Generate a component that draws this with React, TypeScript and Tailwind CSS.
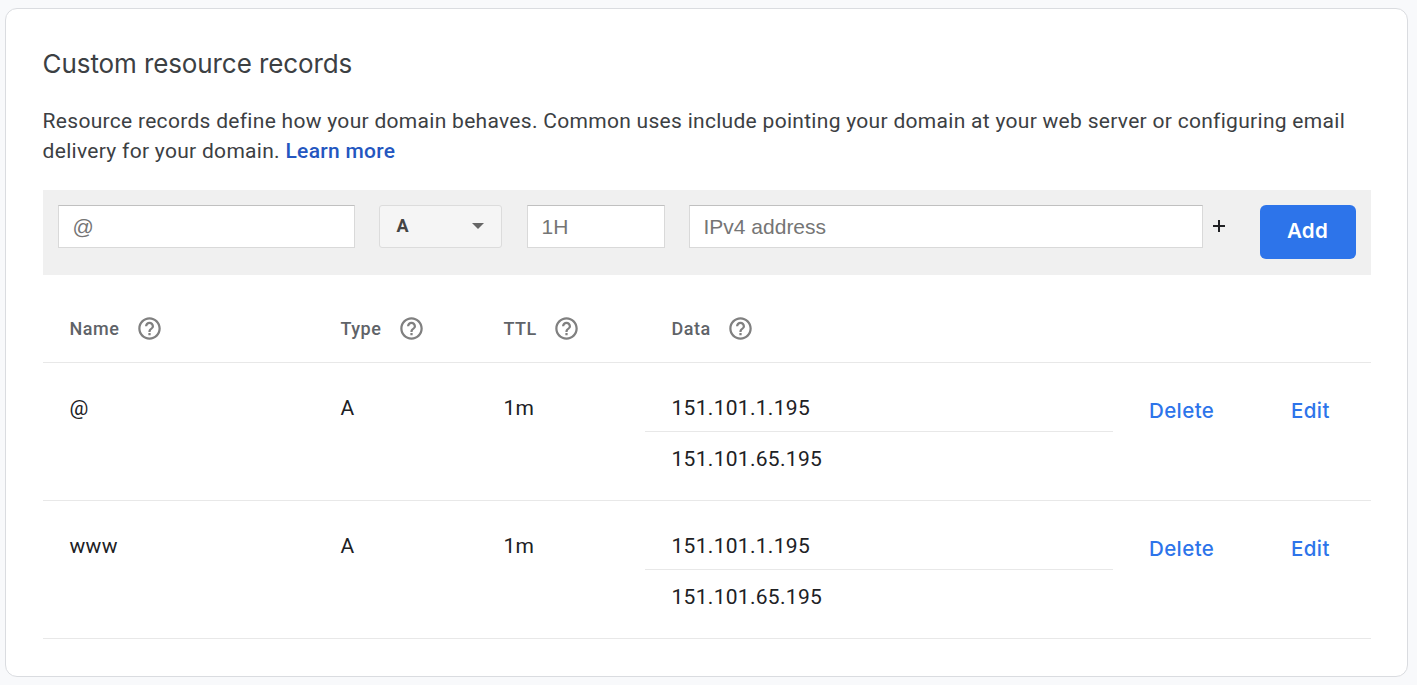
type DnsRecord = { name: string; type: string; ttl: string; data: string[] };

const records: DnsRecord[] = [
  { name: "@", type: "A", ttl: "1m", data: ["151.101.1.195", "151.101.65.195"] },
  { name: "www", type: "A", ttl: "1m", data: ["151.101.1.195", "151.101.65.195"] },
];

const inputClass =
  "h-[43px] shrink-0 border border-[#d9d9d9] border-t-[#c0c0c0] bg-white pl-[13.5px] font-['Liberation_Sans',sans-serif] text-[21px] text-[#757575] placeholder:text-[#757575] placeholder:opacity-100 outline-none";

const actionClass =
  "cursor-pointer pt-[33px] pl-[9px] font-['Inter',sans-serif] text-[20.5px] font-medium tracking-[0.4px] text-[#2d74ea]";

function HelpIcon() {
  return (
    <svg viewBox="0 0 24 24" className="size-[27px] shrink-0 fill-[#808080]" aria-hidden="true">
      <path d="M11 18h2v-2h-2v2zm1-16C6.48 2 2 6.480 2 12s4.480 10 10 10 10-4.480 10-10S17.520 2 12 2zm0 18c-4.410 0-8-3.590-8-8s3.590-8 8-8 8 3.590 8 8-3.590 8-8 8zm0-14c-2.210 0-4 1.790-4 4h2c0-1.100.9-2 2-2s2 .9 2 2c0 2-3 1.750-3 5h2c0-2.250 3-2.500 3-5 0-2.210-1.790-4-4-4z" />
    </svg>
  );
}

function ColumnHeading({ label }: { label: string }) {
  return (
    <div className="flex h-[27px] items-center gap-[16.6px] text-[18px] font-medium tracking-[0.5px] text-[#5f6368]">
      <span>{label}</span>
      <HelpIcon />
    </div>
  );
}

function RecordRow({ record }: { record: DnsRecord }) {
  return (
    <div className="grid h-[138px] grid-cols-[271px_163px_141.5px_495px_142px_1fr] border-b border-[#e8e8e8] pl-[26.5px] text-[21px] leading-[30px] tracking-[0.3px] text-[#202124]">
      <div className="pt-[30px]">{record.name}</div>
      <div className="pt-[30px]">{record.type}</div>
      <div className="pt-[30px]">{record.ttl}</div>
      <div className="w-[468px] pt-[18px]">
        {record.data.map((value, index) => (
          <div key={value} className={index === 0 ? "h-[51px] border-b border-[#e8e8e8] pt-[12px] pl-[26.5px]" : "pt-[12px] pl-[26.5px]"}>
            {value}
          </div>
        ))}
      </div>
      <a className={actionClass}>Delete</a>
      <a className={actionClass}>Edit</a>
    </div>
  );
}

export default function App() {
  return (
    <div className="flex h-[685px] w-[1417px] bg-[#f8f9fb] pt-[8px] pl-[5px] font-['Roboto',sans-serif]">
      <main className="h-[669px] w-[1403px] rounded-[12px] border border-[#dadce0] bg-white pr-[37px] pl-[36.6px] pt-[37px]">
        <h1 className="h-[36px] whitespace-nowrap font-['Inter',sans-serif] text-[26px] leading-[36px] tracking-[-0.1px] text-[#3c4043]">
          Custom resource records
        </h1>
        <p className="mt-[24px] w-[1327px] text-[21px] leading-[30px] tracking-[0.295px] text-[#3c4043]">
          <span className="block whitespace-nowrap">
            Resource records define how your domain behaves. Common uses include pointing your domain at your web server or configuring email
          </span>
          <span className="block whitespace-nowrap">
            delivery for your domain. <a className="cursor-pointer font-medium text-[#2456c0]">Learn more</a>
          </span>
        </p>
        <form className="mt-[24px] ml-[0.4px] flex h-[85px] w-[1328px] items-start bg-[#f0f0f0] pt-[15px] pl-[15px]">
          <input aria-label="Name" placeholder="@" className={`${inputClass} w-[297px]`} />
          <button type="button" className="ml-[24px] flex h-[43px] w-[123px] shrink-0 items-center justify-between rounded-[3px] border border-[#dcdcdc] bg-[#f5f5f5] pr-[17px] pb-[2px] pl-[16.5px] text-[18px] font-bold text-[#444]">
            A
            <svg viewBox="0 0 12 6" className="h-[6px] w-[12px] fill-[#666]" aria-hidden="true">
              <path d="M0 0h12L6 6z" />
            </svg>
          </button>
          <input aria-label="TTL" placeholder="1H" className={`${inputClass} ml-[25px] w-[138px]`} />
          <input aria-label="Data" placeholder="IPv4 address" className={`${inputClass} ml-[24px] w-[514px]`} />
          <button type="button" aria-label="Add another value" className="flex h-[41px] w-[57px] shrink-0 items-center pl-[10px]">
            <svg viewBox="0 0 12 12" className="size-[12px] fill-[#202124]" aria-hidden="true">
              <path d="M5 0h2v5h5v2H7v5H5V7H0V5h5z" />
            </svg>
          </button>
          <button type="button" className="h-[54px] w-[96px] shrink-0 rounded-[6px] bg-[#2d74ea] pr-[1px] pb-[2px] font-['Inter',sans-serif] text-[20.5px] font-semibold tracking-[0.3px] text-white">
            Add
          </button>
        </form>
        <section className="ml-[0.4px] w-[1328px]">
          <div className="grid h-[88px] grid-cols-[271px_163px_168px_1fr] items-center border-b border-[#e8e8e8] pt-[20px] pl-[26.5px]">
            <ColumnHeading label="Name" />
            <ColumnHeading label="Type" />
            <ColumnHeading label="TTL" />
            <ColumnHeading label="Data" />
          </div>
          {records.map((record) => (
            <RecordRow key={record.name} record={record} />
          ))}
        </section>
      </main>
    </div>
  );
}
